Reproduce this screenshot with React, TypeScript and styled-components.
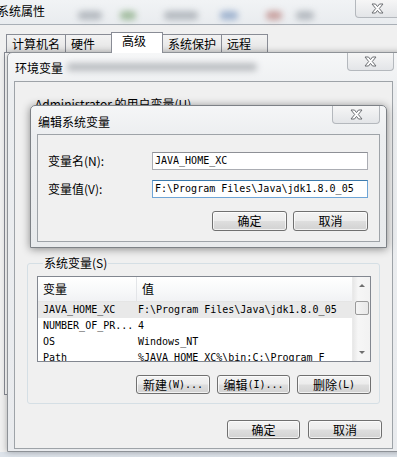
import React from "react";
import styled, { createGlobalStyle } from "styled-components";

const Global = createGlobalStyle`
  html, body { margin: 0; padding: 0; }
  body {
    width: 397px; height: 457px; overflow: hidden;
    background: #e6eaee;
    font-family: "Noto Sans CJK SC", sans-serif;
  }
`;

const CJK = `"Noto Sans CJK SC", sans-serif`;
const MONO = `"DejaVu Sans Mono", "Liberation Mono", monospace`;

const Screen = styled.div`
  position: relative;
  width: 397px;
  height: 457px;
  overflow: hidden;
  background: linear-gradient(#eef1f4, #dde3ea);
  font-family: ${CJK};
  font-size: 12px;
  color: #000;
`;

/* ---------- outer window ---------- */
const MainWindow = styled.div`
  position: absolute;
  left: -6px;
  top: 0;
  width: 420px;
  height: 452px;
  display: flex;
  flex-direction: column;
`;

const MainTitleBar = styled.div`
  height: 24px;
  display: flex;
  align-items: flex-start;
  border-bottom: 1px solid #a9afb6;
  background: linear-gradient(#f1f3f5, #e9ecef);
`;

const MainTitle = styled.div`
  padding: 4px 0 0 3px;
  line-height: 14px;
  width: 75px;
  flex: none;
`;

const Blobs = styled.div`
  flex: 1;
  display: flex;
  align-items: center;
  height: 24px;
`;

const Blob = styled.span<{ $w: number; $gap: number; $c?: string }>`
  flex: none;
  width: ${(p) => p.$w}px;
  height: 9px;
  margin-left: ${(p) => p.$gap}px;
  margin-top: 6px;
  border-radius: 4px;
  background: ${(p) => p.$c || "#a7adb4"};
  filter: blur(3px);
  opacity: 0.8;
`;

const CloseButton = styled.div<{ $w: number }>`
  flex: none;
  width: ${(p) => p.$w}px;
  height: 18px;
  box-sizing: border-box;
  border: 1px solid #b4b8bd;
  border-top: none;
  border-radius: 0 0 4px 4px;
  background: linear-gradient(#f6f6f6, #e3e5e8);
  display: flex;
  align-items: center;
  justify-content: center;
`;

const MainBody = styled.div`
  flex: 1;
  background: #f0f0f0;
  display: flex;
  flex-direction: column;
  padding-top: 7px;
`;

const TabStrip = styled.div`
  display: flex;
  align-items: flex-end;
  padding-left: 13px;
  height: 21px;
`;

const Tab = styled.div<{ $w: number; $active?: boolean }>`
  width: ${(p) => p.$w}px;
  height: ${(p) => (p.$active ? 21 : 19)}px;
  box-sizing: border-box;
  border: 1px solid #898c95;
  border-bottom: ${(p) => (p.$active ? "none" : "1px solid #898c95")};
  margin-left: -1px;
  background: ${(p) => (p.$active ? "#fff" : "linear-gradient(#f3f3f3, #e3e3e3)")};
  padding-left: ${(p) => (p.$active ? 10 : 5)}px;
  line-height: ${(p) => (p.$active ? 16 : 17)}px;
  position: relative;
  z-index: ${(p) => (p.$active ? 1 : 0)};
`;

const TabPanel = styled.div`
  margin-left: 10px;
  height: 341px;
  border: 1px solid #898c95;
  background: #fff;
  margin-top: -1px;
`;

/* ---------- environment dialog ---------- */
const EnvDialog = styled.div`
  position: absolute;
  left: 7px;
  top: 52px;
  width: 398px;
  height: 400px;
  box-sizing: border-box;
  border: 1px solid #8e9297;
  border-radius: 5px 5px 0 0;
  background: linear-gradient(#f6f7f8, #eceef0 40px, #e9ebee);
  box-shadow: 0 0 6px rgba(0, 0, 0, 0.3);
  display: flex;
  flex-direction: column;
`;

const DlgTitleRow = styled.div<{ $h: number; $pr: number }>`
  height: ${(p) => p.$h}px;
  flex: none;
  display: flex;
  align-items: flex-start;
  padding-left: 7px;
  padding-right: ${(p) => p.$pr}px;
`;

const DlgTitle = styled.div<{ $top: number }>`
  padding-top: ${(p) => p.$top}px;
  line-height: 14px;
  flex: none;
`;

const BlurText = styled.span`
  flex: none;
  margin-top: 10px;
  margin-left: 4px;
  width: 190px;
  height: 8px;
  border-radius: 4px;
  background: #8c9096;
  filter: blur(3px);
  opacity: 0.55;
`;

const Filler = styled.div`
  flex: 1;
`;

const EnvClient = styled.div`
  margin-left: 6px;
  width: 379px;
  height: 368px;
  box-sizing: border-box;
  border: 1px solid #9ea3a8;
  background: #f0f0f0;
  display: flex;
  flex-direction: column;
`;

const UserVarsLabel = styled.div`
  margin: 15px 0 0 20px;
  line-height: 14px;
`;

const GroupBox = styled.fieldset`
  margin: 145px 0 0 12px;
  width: 353px;
  box-sizing: border-box;
  border: 1px solid #d5dfe5;
  border-radius: 3px;
  padding: 6px 8px 9px 9px;
  min-inline-size: 0;
`;

const Legend = styled.legend`
  padding: 0 1px;
  margin-left: 6px;
  line-height: 14px;
  font-size: 12px;
`;

const ListView = styled.div`
  height: 86px;
  box-sizing: border-box;
  border: 1px solid #828790;
  background: #fff;
  display: flex;
  overflow: hidden;
`;

const ListContent = styled.div`
  flex: 1;
  display: flex;
  flex-direction: column;
  overflow: hidden;
`;

const ListHeader = styled.div`
  height: 25px;
  flex: none;
  display: grid;
  grid-template-columns: 99px 1fr;
  box-sizing: border-box;
  border-bottom: 1px solid #e5e5e5;
  background: linear-gradient(#ffffff, #f7f8f9 60%, #f1f2f4);
`;

const HeaderCell = styled.div<{ $divider?: boolean }>`
  padding-left: 5px;
  line-height: 24px;
  font-size: 12px;
  border-right: ${(p) => (p.$divider ? "1px solid #e3e5e8" : "none")};
`;

const ListRow = styled.div<{ $selected?: boolean }>`
  height: 16px;
  flex: none;
  display: grid;
  grid-template-columns: 99px 1fr;
  background: ${(p) => (p.$selected ? "#e9e9e9" : "transparent")};
  font-family: ${MONO};
  font-size: 10px;
  line-height: 16px;
  white-space: nowrap;
`;

const RowCell = styled.div<{ $pl: number }>`
  padding-left: ${(p) => p.$pl}px;
  overflow: hidden;
`;

const ScrollBar = styled.div`
  width: 17px;
  flex: none;
  background: linear-gradient(90deg, #e7e7e7, #f6f6f6 30%, #f2f2f2);
  border-left: 1px solid #eaeaea;
  display: flex;
  flex-direction: column;
  align-items: center;
`;

const ScrollArrow = styled.div<{ $down?: boolean }>`
  height: 17px;
  width: 17px;
  display: flex;
  align-items: center;
  justify-content: center;
  &::before {
    content: "";
    border-left: 3px solid transparent;
    border-right: 3px solid transparent;
    ${(p) =>
      p.$down ? "border-top: 3px solid #6e6e6e;" : "border-bottom: 3px solid #6e6e6e;"}
  }
`;

const Thumb = styled.div`
  width: 14px;
  height: 14px;
  margin-top: 7px;
  box-sizing: border-box;
  border: 1px solid #9a9a9a;
  border-radius: 2px;
  background: linear-gradient(90deg, #f4f4f4, #e8e8e8);
`;

const ButtonRow = styled.div<{ $gap: number; $top: number; $pr: number }>`
  display: flex;
  justify-content: flex-end;
  gap: ${(p) => p.$gap}px;
  margin-top: ${(p) => p.$top}px;
  padding-right: ${(p) => p.$pr}px;
`;

const WinButton = styled.div<{ $w: number; $h?: number }>`
  width: ${(p) => p.$w}px;
  height: ${(p) => p.$h || 19}px;
  box-sizing: border-box;
  border: 1px solid #707070;
  border-radius: 3px;
  background: linear-gradient(#f3f3f3 0%, #ececec 48%, #dedede 52%, #d2d2d2 100%);
  box-shadow: inset 0 0 0 1px rgba(255, 255, 255, 0.7);
  display: flex;
  align-items: center;
  justify-content: center;
  font-size: 12px;
  line-height: 14px;
  white-space: nowrap;
`;

const Hot = styled.span`
  font-family: ${MONO};
  font-size: 10px;
`;

/* ---------- edit dialog ---------- */
const EditDialog = styled.div`
  position: absolute;
  left: 30px;
  top: 105px;
  width: 357px;
  height: 143px;
  box-sizing: border-box;
  border: 1px solid #7d8186;
  border-radius: 5px 5px 0 0;
  background: linear-gradient(#f5f6f7, #eceef0 30px, #e8eaec);
  box-shadow: 0 1px 8px rgba(0, 0, 0, 0.45);
  display: flex;
  flex-direction: column;
`;

const EditClient = styled.div`
  margin-left: 6px;
  width: 343px;
  height: 108px;
  box-sizing: border-box;
  border: 1px solid #9ea3a8;
  background: #f0f0f0;
  padding: 17px 10px 0 10px;
  display: flex;
  flex-direction: column;
`;

const FieldRow = styled.div<{ $top: number }>`
  display: flex;
  align-items: center;
  margin-top: ${(p) => p.$top}px;
`;

const FieldLabel = styled.div`
  width: 104px;
  flex: none;
  line-height: 14px;
`;

const TextInput = styled.div<{ $focused?: boolean }>`
  width: 216px;
  height: 18px;
  box-sizing: border-box;
  border: 1px solid ${(p) => (p.$focused ? "#6fa5d6" : "#abadb3")};
  border-top-color: ${(p) => (p.$focused ? "#3d7bad" : "#8e9096")};
  background: #fff;
  padding-left: 2px;
  font-family: ${MONO};
  font-size: 10px;
  line-height: 16px;
  white-space: nowrap;
  overflow: hidden;
`;

const CloseX = () => (
  <svg width="13" height="11" viewBox="0 0 13 11">
    <polygon
      points="1,1 4.5,1 6.5,3.6 8.5,1 12,1 8.3,5.5 12,10 8.5,10 6.5,7.4 4.5,10 1,10 4.7,5.5"
      fill="#ffffff"
      stroke="#6c6f73"
      strokeWidth="1"
      strokeLinejoin="round"
    />
  </svg>
);

const rows = [
  { name: "JAVA_HOME_XC", value: "F:\\Program Files\\Java\\jdk1.8.0_05", selected: true },
  { name: "NUMBER_OF_PR...", value: "4" },
  { name: "OS", value: "Windows_NT" },
  { name: "Path", value: "%JAVA_HOME_XC%\\bin;C:\\Program F" },
];

export default function App() {
  return (
    <Screen>
      <Global />
      <MainWindow>
        <MainTitleBar>
          <MainTitle>系统属性</MainTitle>
          <Blobs>
            <Blob $w={24} $gap={6} />
            <Blob $w={16} $gap={18} $c="#8fb08a" />
            <Blob $w={34} $gap={28} />
            <Blob $w={18} $gap={22} $c="#8ea6c8" />
            <Blob $w={16} $gap={28} $c="#c08f8c" />
            <Blob $w={18} $gap={14} />
          </Blobs>
          <CloseButton $w={45} style={{ marginRight: 14 }}>
            <CloseX />
          </CloseButton>
        </MainTitleBar>
        <MainBody>
          <TabStrip>
            <Tab $w={60}>计算机名</Tab>
            <Tab $w={47}>硬件</Tab>
            <Tab $w={52} $active>高级</Tab>
            <Tab $w={60}>系统保护</Tab>
            <Tab $w={47}>远程</Tab>
          </TabStrip>
          <TabPanel />
        </MainBody>
      </MainWindow>

      <EnvDialog>
        <DlgTitleRow $h={28} $pr={10}>
          <DlgTitle $top={8}>环境变量</DlgTitle>
          <BlurText />
          <Filler />
          <CloseButton $w={47}>
            <CloseX />
          </CloseButton>
        </DlgTitleRow>
        <EnvClient>
          <UserVarsLabel>Administrator 的用户变量(U)</UserVarsLabel>
          <GroupBox>
            <Legend>系统变量(S)</Legend>
            <ListView>
              <ListContent>
                <ListHeader>
                  <HeaderCell $divider>变量</HeaderCell>
                  <HeaderCell>值</HeaderCell>
                </ListHeader>
                {rows.map((r) => (
                  <ListRow key={r.name} $selected={r.selected}>
                    <RowCell $pl={5}>{r.name}</RowCell>
                    <RowCell $pl={1}>{r.value}</RowCell>
                  </ListRow>
                ))}
              </ListContent>
              <ScrollBar>
                <ScrollArrow />
                <Thumb />
                <Filler />
                <ScrollArrow $down />
              </ScrollBar>
            </ListView>
            <ButtonRow $gap={7} $top={13} $pr={0}>
              <WinButton $w={74}>新建<Hot>(W)...</Hot></WinButton>
              <WinButton $w={73}>编辑<Hot>(I)...</Hot></WinButton>
              <WinButton $w={74}>删除<Hot>(L)</Hot></WinButton>
            </ButtonRow>
          </GroupBox>
          <ButtonRow $gap={8} $top={16} $pr={10}>
            <WinButton $w={73}>确定</WinButton>
            <WinButton $w={74}>取消</WinButton>
          </ButtonRow>
        </EnvClient>
      </EnvDialog>

      <EditDialog>
        <DlgTitleRow $h={28} $pr={6}>
          <DlgTitle $top={9}>编辑系统变量</DlgTitle>
          <Filler />
          <CloseButton $w={48}>
            <CloseX />
          </CloseButton>
        </DlgTitleRow>
        <EditClient>
          <FieldRow $top={0}>
            <FieldLabel>变量名(N):</FieldLabel>
            <TextInput>JAVA_HOME_XC</TextInput>
          </FieldRow>
          <FieldRow $top={10}>
            <FieldLabel>变量值(V):</FieldLabel>
            <TextInput $focused>F:\Program Files\Java\jdk1.8.0_05</TextInput>
          </FieldRow>
          <ButtonRow $gap={6} $top={13} $pr={1}>
            <WinButton $w={75} $h={20}>确定</WinButton>
            <WinButton $w={75} $h={20}>取消</WinButton>
          </ButtonRow>
        </EditClient>
      </EditDialog>
    </Screen>
  );
}
